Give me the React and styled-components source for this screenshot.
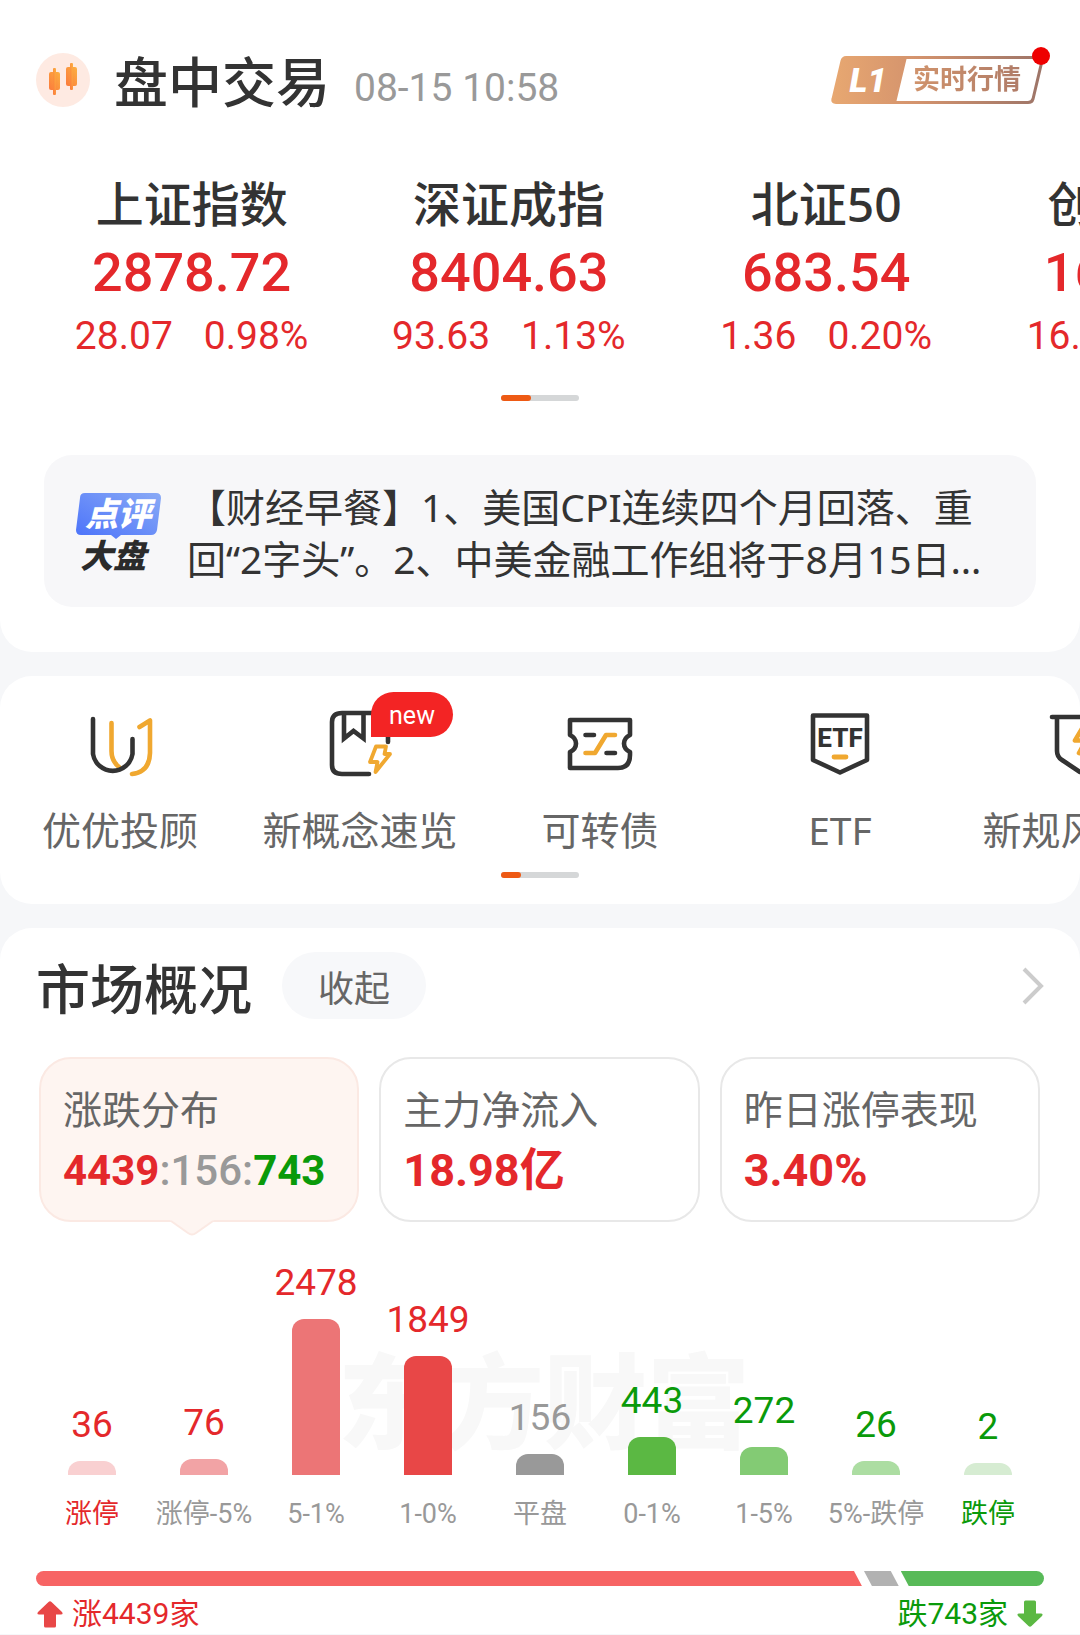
import React from 'react'
import styled, { createGlobalStyle } from 'styled-components'

const RED = '#e4282b'
const GREEN = '#0a9a0a'
const GREY = '#999'
const DARK = '#333'
const ORANGE = '#f0a830'

const TEXT_FONT = `'Noto Sans', 'Noto Sans CJK SC', sans-serif`

const GlobalStyle = createGlobalStyle`
  * {
    box-sizing: border-box;
  }
  body {
    margin: 0;
    background: #f6f7f9;
    color: #333;
    font-family: Roboto, 'Noto Sans CJK SC', sans-serif;
    overflow-x: hidden;
  }
  h1, h2, p, ul {
    margin: 0;
    padding: 0;
  }
  ul {
    list-style: none;
  }
  button {
    font-family: inherit;
    border: none;
    padding: 0;
    cursor: pointer;
  }
  a {
    color: inherit;
    text-decoration: none;
  }
`

const Page = styled.main`
  display: flex;
  flex-direction: column;
  gap: 24px;
`

const Panel = styled.section`
  background: #fff;
  border-radius: ${p => p.$radius || '32px'};
  padding: ${p => p.$padding};
  overflow: hidden;
`

const Header = styled.header`
  display: flex;
  align-items: center;
  padding: 0 36px;
`

const Title = styled.h1`
  font-family: ${TEXT_FONT};
  font-size: 54px;
  line-height: 60px;
  font-weight: 500;
  padding-top: 4px;
  margin-left: 24px;
`

const Time = styled.time`
  font-size: 39px;
  line-height: 48px;
  color: ${GREY};
  margin: 16px auto 0 24px;
`

const LevelLink = styled.a`
  position: relative;
  display: flex;
  align-items: center;
  width: 213px;
  height: 48px;
  svg {
    position: absolute;
    inset: 0;
  }
`

const LevelTag = styled.span`
  position: relative;
  width: 74px;
  text-align: center;
  color: #fff;
  font-size: 34px;
  line-height: 40px;
  font-weight: 900;
  font-style: italic;
`

const LevelText = styled.span`
  position: relative;
  margin-left: 8px;
  font-size: 27px;
  line-height: 40px;
  font-weight: 700;
  background: linear-gradient(90deg, #d0936c, #b07c68);
  background-clip: text;
  color: transparent;
`

const Dot = styled.span`
  position: absolute;
  top: -9px;
  right: -6px;
  width: 18px;
  height: 18px;
  border-radius: 50%;
  background: #ee0000;
`

const IndexList = styled.ul`
  display: flex;
  margin-top: 62px;
  padding-left: 33px;
`

const IndexItem = styled.li`
  flex: 0 0 calc(100% / 3.3);
  display: flex;
  flex-direction: column;
  align-items: center;
  color: ${RED};
  white-space: nowrap;
`

const IndexName = styled.span`
  font-family: ${TEXT_FONT};
  font-size: 48px;
  line-height: 60px;
  font-weight: 500;
  color: ${DARK};
`

const IndexValue = styled.span`
  font-size: 54px;
  line-height: 78px;
  font-weight: 500;
`

const IndexChange = styled.span`
  display: flex;
  gap: 31px;
  font-size: 39px;
  line-height: 48px;
`

const Indicator = styled.div`
  width: 78px;
  height: 6px;
  margin: ${p => p.$top}px auto 0;
  border-radius: 3px;
  background: #d5d7d8;
  &::before {
    content: '';
    display: block;
    width: ${p => p.$active}px;
    height: 6px;
    border-radius: 3px;
    background: #ee5a14;
  }
`

const Comment = styled.a`
  display: flex;
  align-items: center;
  gap: 26px;
  margin: 54px 44px 0;
  padding: 26px 36px 22px 32px;
  border-radius: 28px;
  background: #f7f7f9;
  svg {
    flex: none;
  }
`

const CommentText = styled.p`
  font-family: ${TEXT_FONT};
  font-size: 39px;
  line-height: 52px;
`

const ToolList = styled.ul`
  display: flex;
`

const ToolItem = styled.li`
  flex: 0 0 calc(100% / 4.5);
`

const ToolLink = styled.a`
  display: flex;
  flex-direction: column;
  align-items: center;
  gap: 29px;
  font-family: ${TEXT_FONT};
  font-size: 39px;
  line-height: 48px;
  color: #666;
  white-space: nowrap;
`

const ToolIcon = styled.span`
  position: relative;
  width: 64px;
  height: 64px;
  font-family: Roboto, sans-serif;
  svg {
    display: block;
    overflow: visible;
  }
`

const NewBadge = styled.span`
  position: absolute;
  left: 43px;
  top: -21px;
  width: 82px;
  height: 45px;
  border-radius: 23px 23px 23px 0;
  background: #f32424;
  color: #fff;
  font-size: 25px;
  line-height: 48px;
  text-align: center;
`

const SectionHead = styled.header`
  display: flex;
  align-items: center;
  padding: 0 35px 0 36px;
`

const SectionTitle = styled.h2`
  font-family: ${TEXT_FONT};
  font-size: 54px;
  line-height: 60px;
  font-weight: 500;
  padding-top: 7px;
`

const FoldButton = styled.button`
  width: 144px;
  height: 67px;
  margin: 0 auto 0 30px;
  border-radius: 34px;
  background: #f7f8fa;
  color: #666;
  font-size: 36px;
`

const MoreLink = styled.a`
  display: flex;
`

const SummaryGrid = styled.div`
  display: grid;
  grid-template-columns: repeat(3, 1fr);
  gap: 20px;
  margin: 38px 40px 0 39px;
`

const SummaryCard = styled.button`
  position: relative;
  display: flex;
  flex-direction: column;
  gap: 9px;
  padding: 26px 22px 20px;
  text-align: left;
  border: 2px solid ${p => (p.$active ? '#fbe9e3' : '#e8e8e8')};
  border-radius: 32px;
  background: ${p => (p.$active ? '#fef5f1' : '#fff')};
`

const SummaryLabel = styled.span`
  font-family: ${TEXT_FONT};
  font-size: 39px;
  line-height: 48px;
  color: #666;
`

const SummaryValue = styled.span`
  font-size: ${p => p.$size || 45}px;
  line-height: 58px;
  font-weight: 700;
  color: ${RED};
`

const Part = styled.span`
  color: ${p => p.$color};
  font-weight: ${p => p.$weight || 700};
`

const Pointer = styled.svg`
  position: absolute;
  left: 129px;
  top: 100%;
`

const Chart = styled.div`
  position: relative;
  margin: 41px 36px 0;
`

const Watermark = styled.span`
  position: absolute;
  left: 8px;
  right: 0;
  top: 68px;
  text-align: center;
  font-size: 103px;
  line-height: 150px;
  font-weight: 900;
  color: #f8f8f8;
`

const Columns = styled.ul`
  position: relative;
  display: grid;
  grid-template-columns: repeat(9, 1fr);
  align-items: end;
`

const Column = styled.li`
  display: flex;
  flex-direction: column;
  align-items: center;
`

const Count = styled.span`
  font-size: 37px;
  line-height: 40px;
  margin-bottom: 16px;
  color: ${p => p.$color};
`

const Bar = styled.span`
  width: 48px;
  border-radius: 12px 12px 0 0;
  background: ${p => p.$color};
`

const Range = styled.span`
  margin-top: 23px;
  font-size: 27px;
  line-height: 32px;
  white-space: nowrap;
  color: ${p => p.$color};
`

const RatioBar = styled.div`
  display: flex;
  gap: 2px;
  height: 15px;
  margin: 41px 36px 0;
  border-radius: 8px;
  overflow: hidden;
`

const cuts = {
  end: 'polygon(0 0, calc(100% - 8px) 0, 100% 100%, 0 100%)',
  both: 'polygon(0 0, calc(100% - 8px) 0, 100% 100%, 8px 100%)',
  start: 'polygon(0 0, 100% 0, 100% 100%, 8px 100%)',
}

const Ratio = styled.span`
  flex: ${p => p.$value} 0 6px;
  background: ${p => p.$color};
  clip-path: ${p => cuts[p.$cut]};
`

const Totals = styled.div`
  display: flex;
  justify-content: space-between;
  margin: 8px 36px 0;
`

const Total = styled.span`
  display: flex;
  align-items: center;
  gap: 8px;
  font-size: 30px;
  line-height: 40px;
  color: ${p => p.$color};
`

const indexes = [
  { name: '上证指数', value: '2878.72', change: '28.07', percent: '0.98%' },
  { name: '深证成指', value: '8404.63', change: '93.63', percent: '1.13%' },
  { name: '北证50', value: '683.54', change: '1.36', percent: '0.20%' },
  { name: '创业板指', value: '1602.35', change: '16.29', percent: '1.03%' },
]

const columns = [
  { range: '涨停', count: 36, bar: '#f9d0d1', text: RED, label: RED },
  { range: '涨停-5%', count: 76, bar: '#f2a3a5', text: RED },
  { range: '5-1%', count: 2478, bar: '#ec7576', text: RED },
  { range: '1-0%', count: 1849, bar: '#e84747', text: RED },
  { range: '平盘', count: 156, bar: '#999', text: GREY },
  { range: '0-1%', count: 443, bar: '#5bb843', text: GREEN },
  { range: '1-5%', count: 272, bar: '#83cb74', text: GREEN },
  { range: '5%-跌停', count: 26, bar: '#acdda2', text: GREEN },
  { range: '跌停', count: 2, bar: '#d6ecd2', text: GREEN, label: GREEN },
]

const barHeight = count => Math.round(12 + count * 0.058)

function CandleLogo() {
  return (
    <svg width="54" height="54" viewBox="0 0 54 54" aria-hidden="true">
      <defs>
        <linearGradient id="candle" x1="0" y1="1" x2="1" y2="0">
          <stop offset="0" stopColor="#fb7a3c" />
          <stop offset="1" stopColor="#fcb040" />
        </linearGradient>
      </defs>
      <circle cx="27" cy="27" r="27" fill="#feeae2" />
      <g fill="url(#candle)">
        <rect x="13" y="19" width="11" height="18" rx="2" />
        <rect x="17" y="15" width="3" height="27" rx="1" />
        <rect x="30" y="14" width="11" height="19" rx="2" />
        <rect x="34" y="10" width="3" height="27" rx="1" />
      </g>
    </svg>
  )
}

function LevelFrame() {
  return (
    <svg width="213" height="48" viewBox="0 0 213 48" aria-hidden="true">
      <defs>
        <linearGradient id="level" gradientUnits="userSpaceOnUse" x1="0" y1="0" x2="213" y2="0">
          <stop offset="0" stopColor="#e8a871" />
          <stop offset="0.4" stopColor="#d4936d" />
          <stop offset="1" stopColor="#9c7468" />
        </linearGradient>
      </defs>
      <path
        d="M15 1.5H208Q212 1.5 211 5L202 43Q201 46.5 197 46.5H5Q1 46.5 2 43L11 5Q12 1.5 15 1.5Z"
        fill="#fff"
        stroke="url(#level)"
        strokeWidth="3"
      />
      <path d="M15 1H76L65 47H5Q1 47 2 43L11 5Q12 1 15 1Z" fill="url(#level)" />
    </svg>
  )
}

function CommentLogo() {
  return (
    <svg width="85" height="80" viewBox="0 0 85 80" role="img" aria-label="点评大盘">
      <defs>
        <linearGradient id="bubble" x1="0" y1="1" x2="1" y2="0">
          <stop offset="0" stopColor="#4a72fa" />
          <stop offset="1" stopColor="#8aaaf6" />
        </linearGradient>
      </defs>
      <path
        d="M9 0H80Q85 0 85 5L81 37Q80 42 75 42H45L40 46L35 42H5Q0 42 0 37L4 5Q4 0 9 0Z"
        fill="url(#bubble)"
      />
      <g fontSize="33" fontWeight="900" fontStyle="italic" textAnchor="middle">
        <text x="42" y="33" fill="#fff">点评</text>
        <text x="37" y="75" fill="#2b2b2b">大盘</text>
      </g>
    </svg>
  )
}

function Icon({ children }) {
  return (
    <svg
      width="64"
      height="64"
      viewBox="0 0 64 64"
      fill="none"
      stroke={DARK}
      strokeWidth="4.6"
      strokeLinecap="round"
      strokeLinejoin="round"
      aria-hidden="true"
    >
      {children}
    </svg>
  )
}

const AdviserIcon = () => (
  <Icon>
    <path d="M23.5 10V38Q23.5 48 31 54" stroke={ORANGE} />
    <path d="M51.5 14L62 7.5V40Q61.5 59 44 61" stroke={ORANGE} />
    <path d="M5 6V41A20 20 0 0 0 44.5 41V26" />
  </Icon>
)

const ConceptIcon = () => (
  <Icon>
    <path d="M41 61H14Q4 61 4 52V9Q4 0 14 0H51Q60 0 60 10V29" />
    <path d="M16 1V25.5L25.5 18L35.5 25.5V1" strokeLinejoin="miter" />
    <path d="M48 33.5H58L56.500 41H62L47.500 59L49.500 49H42Z" stroke={ORANGE} strokeWidth="3.8" />
  </Icon>
)

const BondIcon = () => (
  <Icon>
    <path d="M2 7H62V22Q56 25 56 30.5T62 39V42Q62 55 50 55H2V39Q8 36 8 30.5T2 22Z" />
    <path d="M17.5 22H26M38.5 40H47" />
    <path d="M17.5 40H27L38 22H47" stroke={ORANGE} />
  </Icon>
)

const EtfIcon = () => (
  <Icon>
    <path d="M5 2.5H59V47L32 59.5L5 47Z" />
    <text x="32" y="34" fontSize="26" fontWeight="800" textAnchor="middle" fill={DARK} stroke="none">
      ETF
    </text>
    <path d="M26 44H38" stroke={ORANGE} strokeWidth="4.8" />
  </Icon>
)

const RiskIcon = () => (
  <Icon>
    <path d="M4 4H62" />
    <path d="M9 5V38Q9 44 14 47L32 59L51 47Q56 44 56 38V5" />
    <path d="M35 14L27 27.5H38L31 40" stroke={ORANGE} />
  </Icon>
)

const tools = [
  { name: '优优投顾', icon: <AdviserIcon /> },
  { name: '新概念速览', icon: <ConceptIcon />, badge: 'new' },
  { name: '可转债', icon: <BondIcon /> },
  { name: 'ETF', icon: <EtfIcon /> },
  { name: '新规风险股', icon: <RiskIcon /> },
]

function Arrow({ color, down }) {
  return (
    <svg width="28" height="28" viewBox="0 0 28 28" fill={color} aria-hidden="true">
      <path
        transform={down ? 'rotate(180 14 14)' : undefined}
        d="M12.500 2Q14 0.500 15.500 2L26 12Q27.500 14.500 25 14.500H20V26Q20 27.500 18.500 27.500H9.500Q8 27.500 8 26V14.500H3Q0.500 14.500 2 12Z"
      />
    </svg>
  )
}

function Distribution() {
  return (
    <Chart>
      <Watermark aria-hidden="true">东方财富</Watermark>
      <Columns>
        {columns.map(column => (
          <Column key={column.range}>
            <Count $color={column.text}>{column.count}</Count>
            <Bar $color={column.bar} style={{ height: barHeight(column.count) }} />
            <Range $color={column.label || GREY}>{column.range}</Range>
          </Column>
        ))}
      </Columns>
    </Chart>
  )
}

export default function App() {
  return (
    <Page>
      <GlobalStyle />

      <Panel $radius="0 0 32px 32px" $padding="48px 0 45px">
        <Header>
          <CandleLogo />
          <Title>盘中交易</Title>
          <Time>08-15 10:58</Time>
          <LevelLink href="#level">
            <LevelFrame />
            <LevelTag>L1</LevelTag>
            <LevelText>实时行情</LevelText>
            <Dot />
          </LevelLink>
        </Header>
        <IndexList>
          {indexes.map(item => (
            <IndexItem key={item.name}>
              <IndexName>{item.name}</IndexName>
              <IndexValue>{item.value}</IndexValue>
              <IndexChange>
                <span>{item.change}</span>
                <span>{item.percent}</span>
              </IndexChange>
            </IndexItem>
          ))}
        </IndexList>
        <Indicator $top={35} $active={30} />
        <Comment href="#comment">
          <CommentLogo />
          <CommentText>
            【财经早餐】1、美国CPI连续四个月回落、重回“2字头”。2、中美金融工作组将于8月15日…
          </CommentText>
        </Comment>
      </Panel>

      <Panel $padding="37px 0 26px">
        <ToolList>
          {tools.map(tool => (
            <ToolItem key={tool.name}>
              <ToolLink href="#tool">
                <ToolIcon>
                  {tool.icon}
                  {tool.badge && <NewBadge>{tool.badge}</NewBadge>}
                </ToolIcon>
                {tool.name}
              </ToolLink>
            </ToolItem>
          ))}
        </ToolList>
        <Indicator $top={18} $active={20} />
      </Panel>

      <Panel $radius="32px 32px 0 0" $padding="24px 0 0">
        <SectionHead>
          <SectionTitle>市场概况</SectionTitle>
          <FoldButton type="button">收起</FoldButton>
          <MoreLink href="#market" aria-label="市场概况">
            <svg width="24" height="40" viewBox="0 0 24 40" fill="none" stroke="#ccc" strokeWidth="4">
              <path d="M3 3L20 20L3 37" />
            </svg>
          </MoreLink>
        </SectionHead>

        <SummaryGrid>
          <SummaryCard type="button" $active>
            <SummaryLabel>涨跌分布</SummaryLabel>
            <SummaryValue $size={42}>
              4439
              <Part $color={GREY} $weight={500}>:156:</Part>
              <Part $color={GREEN}>743</Part>
            </SummaryValue>
            <Pointer width="44" height="16" viewBox="0 0 44 16" aria-hidden="true">
              <path d="M0 0H44L26 13Q22 16 18 13Z" fill="#fef5f1" />
              <path d="M1 1L18 13Q22 16 26 13L43 1" fill="none" stroke="#fbe9e3" strokeWidth="2" />
            </Pointer>
          </SummaryCard>
          <SummaryCard type="button">
            <SummaryLabel>主力净流入</SummaryLabel>
            <SummaryValue>18.98亿</SummaryValue>
          </SummaryCard>
          <SummaryCard type="button">
            <SummaryLabel>昨日涨停表现</SummaryLabel>
            <SummaryValue>3.40%</SummaryValue>
          </SummaryCard>
        </SummaryGrid>

        <Distribution />

        <RatioBar>
          <Ratio $value={4439} $color="#f76464" $cut="end" />
          <Ratio $value={156} $color="#b2b2b2" $cut="both" />
          <Ratio $value={743} $color="#58ba58" $cut="start" />
        </RatioBar>
        <Totals>
          <Total $color={RED}>
            <Arrow color="#e84747" />
            涨4439家
          </Total>
          <Total $color={GREEN}>
            跌743家
            <Arrow color="#5bb843" down />
          </Total>
        </Totals>
      </Panel>
    </Page>
  )
}
